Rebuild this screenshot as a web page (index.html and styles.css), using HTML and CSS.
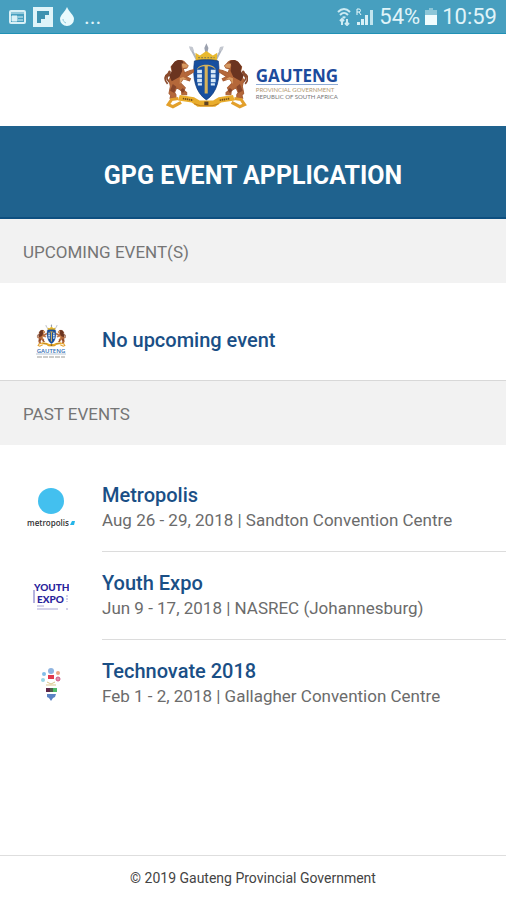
FILE: index.html
```html
<!DOCTYPE html>
<html lang="en">
<head>
  <meta charset="UTF-8" />
  <meta name="viewport" content="width=device-width, initial-scale=1.0"/>
  <title>GPG Event Application</title>
  <link rel="stylesheet" href="styles.css">
</head>
<body>
  <!-- coat of arms, used in the header and as the default event logo -->
  <svg class="symbols" aria-hidden="true">
    <symbol id="lion" viewBox="0 0 86 120">
      <path d="M10 72C-2 58 2 48 12 42c2-6 4-8 5-4 0 8-9 10-9 17 0 7 6 8 8 13" fill="none" stroke="#8a4a2c" stroke-width="5"/>
      <path d="M31 10c8-8 26-7 31 3l7 7-4 6-10 2 4 12 16-7 11-2v6l-22 14 12 6-3 6-18-6-8 12 14 14-4 8 8 6v6H51l-1-12-14-8-6 14 4 6v10H17l2-8-5-6 4-20-4-18 10-20-4-18z" fill="#b5683a" stroke="#a85f36" stroke-width="3"/>
      <path d="M30 8c10-8 22-6 26 1l-6 10 2 16-8 17-22 12-8-16 9-14-3-12z" fill="#6b3420"/>
      <path d="M50 13l14 2 5 5-4 5-11 1zM45 56l10-4 12 7-14 0-8 14z" fill="#d79a62"/>
      <path d="M17 92l8-20 10 8-6 18zM54 84l6 6-6 8-8-8z" fill="#87452a"/>
    </symbol>
    <symbol id="crest" viewBox="24 18 252 192">
      <path d="M107 30l24 46M201 30l-24 46" stroke="#aeb4bf" stroke-width="6"/>
      <path d="M154 18l6 14-6 28-6-28z" fill="#9aa0ad"/>
      <path d="M103 27l11 2 4 12-10-1zM205 27l-11 2-4 12 10-1z" fill="#c3c7cf"/>
      <path d="M122 46l13 8 19-13 19 13 13-8-2 32h-60z" fill="#e8b92f"/>
      <path d="M130 60h48" stroke="#8f8149" stroke-width="4" stroke-dasharray="5 4"/>
      <path d="M119 70c12-5 58-5 70 0 7 50-3 93-35 114-32-21-42-64-35-114z" fill="#174f9f" stroke="#0e3677" stroke-width="2"/>
      <path d="M126 96c4-20 52-20 56 0-10-9-18-11-24-10v79h-9V86c-6-1-14 1-23 10z" fill="#d6b35b"/>
      <path d="M127 96h14v10h-14zM127 109h14v10h-14zM127 122h14v10h-14zM129 135h12v7h-12zM167 96h14v10h-14zM167 109h14v10h-14zM167 122h14v10h-14zM167 135h12v7h-12z" fill="#d7e9f8"/>
      <use href="#lion" x="30" y="64" width="88" height="122"/>
      <use href="#lion" x="30" y="64" width="88" height="122" transform="matrix(-1 0 0 1 308 0)"/>
      <path d="M76 170l42 6 16 10h40l16-10 42-6 5 16-40 6-17 12h-52l-17-12-40-6z" fill="#e9ad2c"/>
      <path d="M72 180l-20 3-10 15 14 6 24-13M236 180l20 3 10 15-14 6-24-13" fill="none" stroke="#e3a02b" stroke-width="9"/>
      <path d="M85 180l30 5M193 185l30-5" stroke="#74501c" stroke-width="5" stroke-dasharray="4 2"/>
      <path d="M148 189h12v11h-12z" fill="#5d4224"/>
      <path d="M118 195l18 6h36l18-6" fill="none" stroke="#c27f19" stroke-width="3"/>
    </symbol>
  </svg>

  <div class="app">
    <div class="status-bar">
      <div class="status-group">
        <svg class="icon-news" viewBox="0 0 17 16">
          <rect x="1" y="2" width="15" height="12" rx="1" fill="none" stroke="#d9f0f6" stroke-width="2"/>
          <path d="M1 4h15M3 7h5v5H3zM9 8h5M9 11h5" fill="#d9f0f6" stroke="#d9f0f6" stroke-width="1"/>
        </svg>
        <svg class="icon-flip" viewBox="0 0 20 20">
          <rect width="20" height="20" fill="#dff4f9"/>
          <path d="M4 4h12v4h-4v4H8v4H4z" fill="#3f92b0"/>
        </svg>
        <svg class="icon-drop" viewBox="0 0 14 19">
          <path d="M7 0c2 5 7 8 7 12a7 7 0 0 1-14 0C0 8 5 5 7 0z" fill="#e9fafd"/>
          <path d="M3 12c0 2 1 3 3 4" fill="none" stroke="#8cc6d8" stroke-width="1"/>
        </svg>
        <span class="dots">...</span>
      </div>
      <div class="status-group status-right">
        <svg class="icon-wifi" viewBox="0 0 14 18">
          <path d="M1 4c4-4 8-4 12 0M3 7c3-3 5-3 8 0" fill="none" stroke="#cdebf3" stroke-width="2"/>
          <path d="M5 9c1-1 3-1 4 0l-2 2z" fill="#cdebf3"/>
          <path d="M5 17v-6M3 13l2-2 2 2M10 11v6M8 15l2 2 2-2" fill="none" stroke="#cdebf3" stroke-width="2"/>
        </svg>
        <svg class="icon-signal" viewBox="0 0 18 18">
          <path d="M1 7V1h2a1 1 0 0 1 0 3H1M3 4l2 3" fill="none" stroke="#e9fafd" stroke-width="1"/>
          <path d="M1 14h3v3H1zM5 11h3v6H5zM9 7h3v10H9z" fill="#d9f0f6"/>
          <path d="M14 2h3v15h-3z" fill="#c2e4ee"/>
        </svg>
        <span>54%</span>
        <svg class="icon-battery" viewBox="0 0 12 17">
          <path d="M4 0h4v2h4v15H0V2h4z" fill="#8cc6d8"/>
          <path d="M0 7h12v10H0z" fill="#f0fcfe"/>
        </svg>
        <span>10:59</span>
      </div>
    </div>

    <header class="brand">
      <svg class="brand-crest" role="img" aria-label="Gauteng coat of arms"><use href="#crest"/></svg>
      <div class="brand-text">
        <strong>GAUTENG</strong>
        <span class="brand-gold">PROVINCIAL GOVERNMENT</span>
        <span>REPUBLIC OF SOUTH AFRICA</span>
      </div>
    </header>

    <h1>GPG EVENT APPLICATION</h1>

    <main>
      <h2>UPCOMING EVENT(S)</h2>
      <ul class="event-list upcoming">
        <li class="event">
          <div class="event-logo">
            <svg class="logo-gauteng" viewBox="0 0 32 34">
              <use href="#crest" x="1" y="0" width="30" height="23"/>
              <text x="16" y="29" text-anchor="middle" font-size="6">GAUTENG</text>
              <path d="M1 30h30" stroke="#b8c6d4"/>
              <path d="M2 33h28" stroke="#9a9a96" stroke-dasharray="5 1"/>
            </svg>
          </div>
          <div class="event-info">
            <h3>No upcoming event</h3>
          </div>
        </li>
      </ul>

      <h2>PAST EVENTS</h2>
      <ul class="event-list">
        <li class="event">
          <div class="event-logo">
            <svg class="logo-metropolis" viewBox="0 0 50 42">
              <circle cx="25" cy="14" r="13" fill="#43c0ef"/>
              <text x="1" y="39" font-size="8" fill="#333">metropolis</text>
              <path d="M46 34h3l-1 4h-4z" fill="#25b5e8"/>
            </svg>
          </div>
          <div class="event-info">
            <h3>Metropolis</h3>
            <p>Aug 26 - 29, 2018 | Sandton Convention Centre</p>
          </div>
        </li>
        <li class="event">
          <div class="event-logo">
            <svg class="logo-youth" viewBox="0 0 36 30">
              <text x="1" y="10" font-size="10">YOUTH</text>
              <text x="4" y="22" font-size="10">EXPO</text>
              <path d="M1 9v13" stroke="#6a66bd"/>
              <path d="M34 14v7M33 28h3" stroke="#a6a3d4" stroke-dasharray="2 1"/>
              <path d="M4 25h7M4 28h21" stroke="#aaa7d5"/>
            </svg>
          </div>
          <div class="event-info">
            <h3>Youth Expo</h3>
            <p>Jun 9 - 17, 2018 | NASREC (Johannesburg)</p>
          </div>
        </li>
        <li class="event">
          <div class="event-logo">
            <svg class="logo-technovate" viewBox="0 0 20 34">
              <circle cx="10" cy="4" r="3" fill="#8fb4e0"/>
              <circle cx="3" cy="7" r="2" fill="#82bde8"/>
              <circle cx="17" cy="6" r="2" fill="#eda683"/>
              <circle cx="2" cy="13" r="2" fill="#9bd6e6"/>
              <circle cx="17" cy="12" r="2" fill="#e08fa8" stroke="#cf5a84"/>
              <path d="M7 8h6v4H7z" fill="#e23a4e"/>
              <path d="M6 15l4 2 4-2M5 18h10" fill="none" stroke="#d9c58a"/>
              <path d="M5 21h4v4H5z" fill="#5e2748"/>
              <path d="M9 21h3v4H9z" fill="#50604c"/>
              <path d="M12 21h4v4h-4z" fill="#4dbb67"/>
              <path d="M6 27h9l-1 3-2 1-2 3-2-3-2-1z" fill="#5b83c4"/>
            </svg>
          </div>
          <div class="event-info">
            <h3>Technovate 2018</h3>
            <p>Feb 1 - 2, 2018 | Gallagher Convention Centre</p>
          </div>
        </li>
      </ul>
    </main>

    <footer>© 2019 Gauteng Provincial Government</footer>
  </div>
</body>
</html>
```
FILE: styles.css
```css
* {
  box-sizing: border-box;
}

body {
  margin: 0;
  font-family: Roboto, "Liberation Sans", sans-serif;
  background: #fff;
}

h1, h2, h3, p, ul {
  margin: 0;
  padding: 0;
}

.symbols {
  display: none;
}

.app {
  display: flex;
  flex-direction: column;
  min-height: 100vh;
}

/* status bar */
.status-bar {
  display: flex;
  justify-content: space-between;
  align-items: center;
  height: 34px;
  padding: 0 9px;
  background: #479fbf;
  border-bottom: 1px solid #2191b5;
  color: #e0f4f9;
  font-size: 22px;
}

.status-group {
  display: flex;
  align-items: center;
  gap: 7px;
}

.status-right {
  gap: 5px;
}

.dots {
  padding-left: 3px;
}

.icon-news {
  width: 17px;
  height: 16px;
}

.icon-flip {
  width: 20px;
  height: 20px;
}

.icon-drop {
  width: 14px;
  height: 19px;
}

.icon-wifi {
  width: 14px;
  height: 18px;
}

.icon-signal {
  width: 18px;
  height: 18px;
}

.icon-battery {
  width: 12px;
  height: 17px;
}

/* logo header */
.brand {
  display: flex;
  justify-content: center;
  align-items: center;
  gap: 8px;
  height: 92px;
  padding: 0 6px 8px 0;
}

.brand-crest {
  width: 86px;
  height: 66px;
}

.brand-text {
  display: flex;
  flex-direction: column;
  padding-top: 16px;
  font-family: Lato, sans-serif;
  font-size: 6px;
  line-height: 7px;
  color: #777;
}

.brand-text strong {
  margin-bottom: 1px;
  border-bottom: 1px solid #8fabd4;
  font-family: "Open Sans", sans-serif;
  font-size: 17px;
  line-height: 16px;
  color: #1c4b9c;
}

.brand-text .brand-gold {
  color: #b39a72;
}

h1 {
  padding: 36px 16px 27px;
  background: #1f628e;
  border-bottom: 2px solid #0d4f80;
  color: #fff;
  font-size: 25px;
  font-weight: 700;
  line-height: 28px;
  text-align: center;
}

h2 {
  padding: 23px 23px 21px;
  background: #f2f2f2;
  color: #757575;
  font-size: 17px;
  font-weight: 400;
  line-height: 20px;
}

/* events */
.event-list {
  padding-top: 19px;
  list-style: none;
}

.upcoming {
  border-bottom: 1px solid #d8d8d8;
}

.event {
  display: flex;
  align-items: center;
}

.event-logo {
  display: flex;
  justify-content: center;
  width: 102px;
}

.event-info {
  flex: 1;
  padding: 18px 0;
  border-bottom: 1px solid #dcdcdc;
}

.event:last-child .event-info {
  border-bottom: none;
}

.upcoming .event-info {
  padding: 25px 0 27px;
}

h3 {
  color: #1a4f86;
  font-size: 20px;
  font-weight: 500;
  line-height: 26px;
}

.event-info p {
  color: #6b6b6b;
  font-size: 17px;
  line-height: 25px;
}

.logo-gauteng {
  width: 32px;
  height: 34px;
  font-family: "Open Sans", sans-serif;
  font-weight: 600;
  fill: #2f6db5;
}

.logo-metropolis {
  width: 50px;
  height: 42px;
  font-family: "Open Sans", sans-serif;
  font-weight: 600;
}

.logo-youth {
  width: 36px;
  height: 30px;
  font-family: Lato, sans-serif;
  font-weight: 900;
  fill: #29239b;
}

.logo-technovate {
  width: 20px;
  height: 34px;
}

footer {
  margin-top: auto;
  padding: 12px 16px;
  border-top: 1px solid #dedede;
  color: #444;
  font-size: 14px;
  line-height: 20px;
  text-align: center;
}
```
